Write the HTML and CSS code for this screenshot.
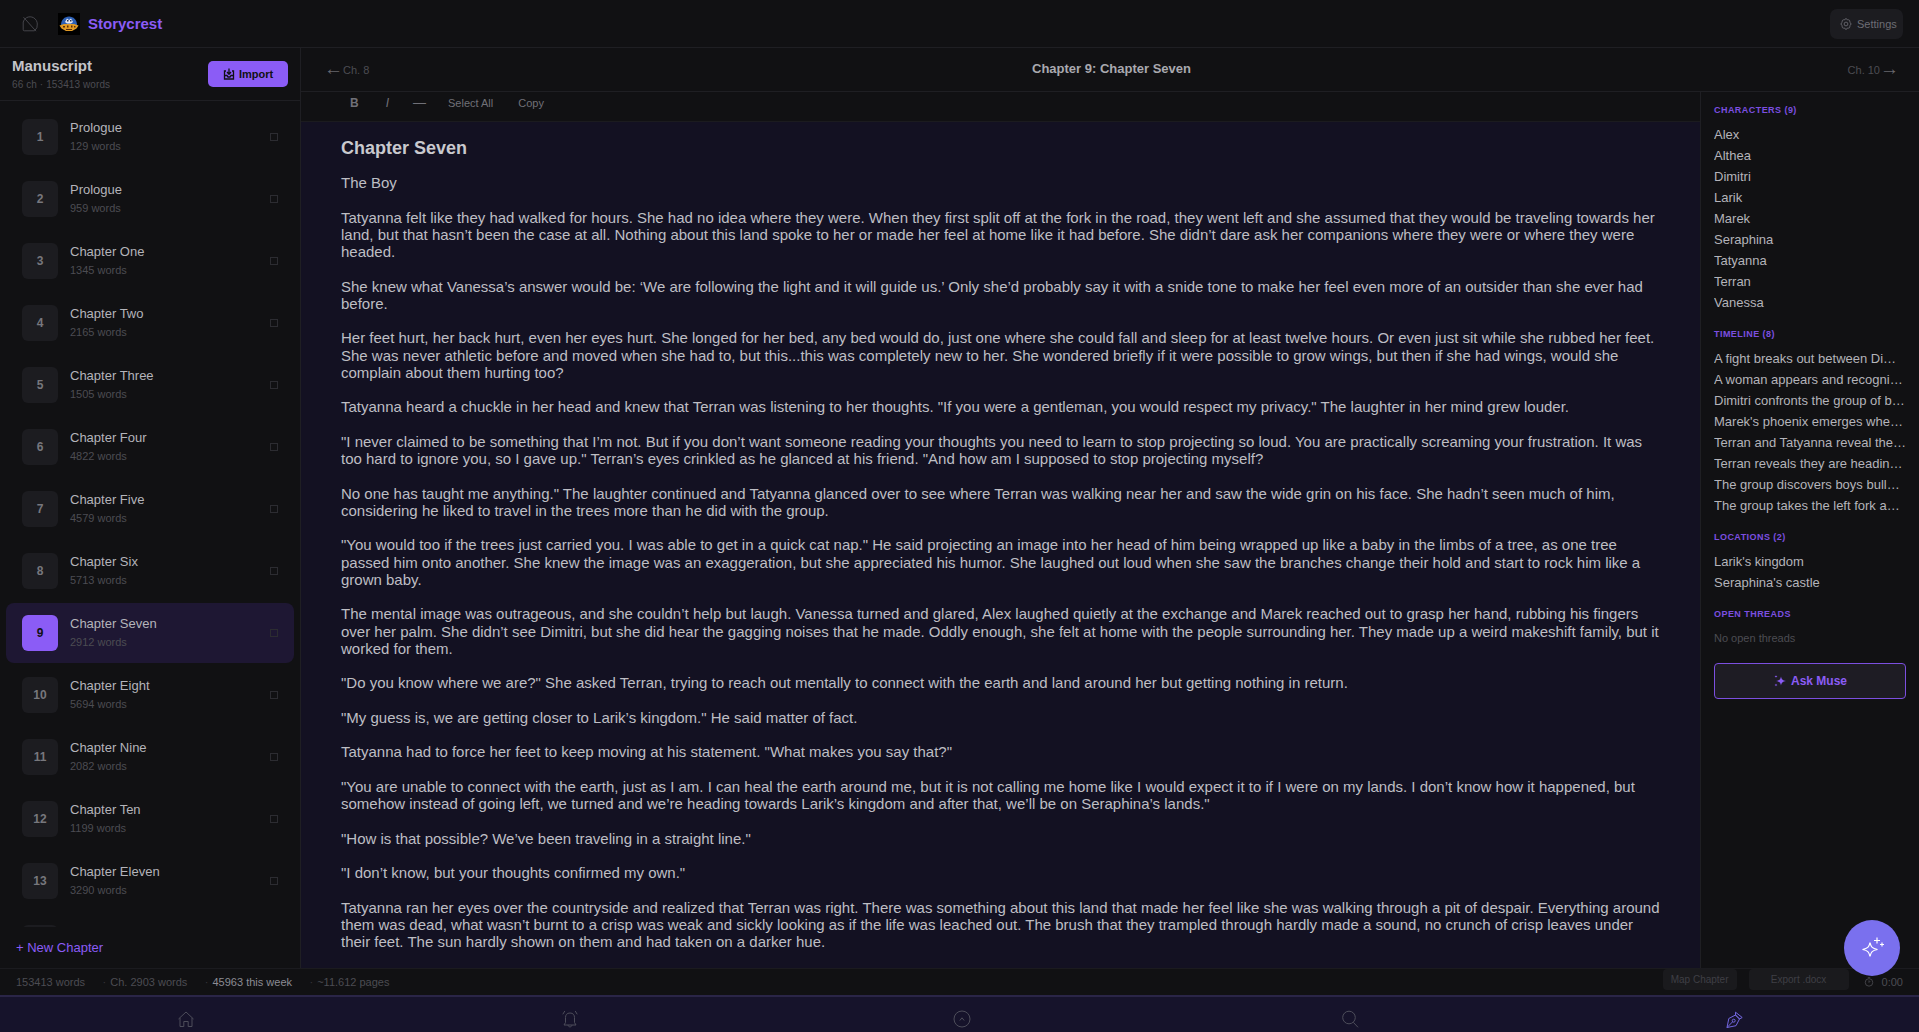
FILE: index.html
```html
<!DOCTYPE html>
<html lang="en">
<head>
<meta charset="utf-8">
<title>Storycrest</title>
<link rel="stylesheet" href="styles.css">
</head>
<body>
<div class="app">
  <header class="topbar">
    <div class="brand">
      <svg class="collapse" viewBox="0 0 16 16" width="16" height="16"><path d="M4.500 1.700A7.300 7.300 0 0 1 15.300 8a7.300 7.300 0 0 1-2.800 6.800H2.200A1 1 0 0 1 1.200 13.800V6A7.300 7.300 0 0 1 4.500 1.700ZM1.500 1.200 14 15.200"/></svg>
      <svg class="logo" viewBox="0 0 22 22" width="22" height="22"><rect width="22" height="22" fill="#000"/><path d="M3 12C3 7 6.500 3.500 11 3.500S19 7 19 12Z" fill="#2c5fb5"/><path d="M7 9 9 5.500l2 1.500 2-1.500 2 3.500-2 1.500H9Z" fill="#e6e8f2"/><path d="M9 7h1.500v1.500H9Zm3 0h1.500v1.500H12Z" fill="#26304f"/><path d="M1.500 12.500 6 11h10l4.500 1.500-2 3-4.500 2.500H8l-4.500-2.500Z" fill="#e19a25"/><path d="M5 13h2v1.500H5Zm4-.5h1.500v2H9Zm4 0h1.500v2H13Zm3 .5h1.500v1.500H16ZM8 16h6v1H8Z" fill="#5a2c08"/></svg>
      <span class="brand-name">Storycrest</span>
    </div>
    <button class="settings"><svg viewBox="0 0 14 14" width="12" height="12"><circle cx="7" cy="7" r="2.200"/><path d="M7 .8c1 0 1.500.8 1.800 1.500.8-.3 1.700-.3 2.300.4s.5 1.500.2 2.200c.8.300 1.500 1 1.500 2.100s-.7 1.700-1.500 2c.3.8.4 1.600-.2 2.300s-1.500.6-2.300.3C8.500 12.400 8 13.200 7 13.200s-1.500-.8-1.800-1.600c-.8.300-1.700.4-2.300-.3s-.5-1.500-.2-2.300C1.900 8.700 1.200 8.100 1.200 7s.7-1.800 1.500-2.100c-.3-.7-.4-1.500.2-2.200s1.500-.7 2.300-.4C5.500 1.600 6 .8 7 .8Z"/></svg>Settings</button>
  </header>
  <div class="main">
    <aside class="sidebar">
      <div class="side-head">
        <div>
          <div class="side-title">Manuscript</div>
          <div class="side-sub">66 ch · 153413 words</div>
        </div>
        <button class="import"><svg viewBox="0 0 12 12" width="12" height="12"><path d="M6 .5v5.500M4 4l2 2.200L8 4M3 3H1.500v8h9V3H9"/><path d="M1.500 7.500h2.500l1 1.500h2l1-1.500h2.500"/></svg>Import</button>
      </div>
      <div class="chapters">
        <div class="chapter"><span class="num">1</span><div class="ch-text"><div class="ch-name">Prologue</div><div class="ch-words">129 words</div></div><span class="check"></span></div>
        <div class="chapter"><span class="num">2</span><div class="ch-text"><div class="ch-name">Prologue</div><div class="ch-words">959 words</div></div><span class="check"></span></div>
        <div class="chapter"><span class="num">3</span><div class="ch-text"><div class="ch-name">Chapter One</div><div class="ch-words">1345 words</div></div><span class="check"></span></div>
        <div class="chapter"><span class="num">4</span><div class="ch-text"><div class="ch-name">Chapter Two</div><div class="ch-words">2165 words</div></div><span class="check"></span></div>
        <div class="chapter"><span class="num">5</span><div class="ch-text"><div class="ch-name">Chapter Three</div><div class="ch-words">1505 words</div></div><span class="check"></span></div>
        <div class="chapter"><span class="num">6</span><div class="ch-text"><div class="ch-name">Chapter Four</div><div class="ch-words">4822 words</div></div><span class="check"></span></div>
        <div class="chapter"><span class="num">7</span><div class="ch-text"><div class="ch-name">Chapter Five</div><div class="ch-words">4579 words</div></div><span class="check"></span></div>
        <div class="chapter"><span class="num">8</span><div class="ch-text"><div class="ch-name">Chapter Six</div><div class="ch-words">5713 words</div></div><span class="check"></span></div>
        <div class="chapter active"><span class="num">9</span><div class="ch-text"><div class="ch-name">Chapter Seven</div><div class="ch-words">2912 words</div></div><span class="check"></span></div>
        <div class="chapter"><span class="num">10</span><div class="ch-text"><div class="ch-name">Chapter Eight</div><div class="ch-words">5694 words</div></div><span class="check"></span></div>
        <div class="chapter"><span class="num">11</span><div class="ch-text"><div class="ch-name">Chapter Nine</div><div class="ch-words">2082 words</div></div><span class="check"></span></div>
        <div class="chapter"><span class="num">12</span><div class="ch-text"><div class="ch-name">Chapter Ten</div><div class="ch-words">1199 words</div></div><span class="check"></span></div>
        <div class="chapter"><span class="num">13</span><div class="ch-text"><div class="ch-name">Chapter Eleven</div><div class="ch-words">3290 words</div></div><span class="check"></span></div>
        <div class="chapter"><span class="num"></span></div>
      </div>
      <div class="new-chapter">+ New Chapter</div>
    </aside>
    <section class="editor">
      <div class="chapter-nav">
        <span class="nav-link"><span class="arrow">←</span>Ch. 8</span>
        <span class="nav-title">Chapter 9: Chapter Seven</span>
        <span class="nav-link nav-next">Ch. 10<span class="arrow">→</span></span>
      </div>
      <div class="editor-row">
        <div class="editor-col">
          <div class="toolbar">
            <span class="tool strong">B</span>
            <span class="tool italic">I</span>
            <span class="tool dash">—</span>
            <span class="tool">Select All</span>
            <span class="tool">Copy</span>
          </div>
          <article class="page">
            <h1>Chapter Seven</h1>
            <p>The Boy</p>
            <p>Tatyanna felt like they had walked for hours. She had no idea where they were. When they first split off at the fork in the road, they went left and she assumed that they would be traveling towards her land, but that hasn’t been the case at all. Nothing about this land spoke to her or made her feel at home like it had before. She didn’t dare ask her companions where they were or where they were headed.</p>
            <p>She knew what Vanessa’s answer would be: ‘We are following the light and it will guide us.’ Only she’d probably say it with a snide tone to make her feel even more of an outsider than she ever had before.</p>
            <p>Her feet hurt, her back hurt, even her eyes hurt. She longed for her bed, any bed would do, just one where she could fall and sleep for at least twelve hours. Or even just sit while she rubbed her feet. She was never athletic before and moved when she had to, but this...this was completely new to her. She wondered briefly if it were possible to grow wings, but then if she had wings, would she complain about them hurting too?</p>
            <p>Tatyanna heard a chuckle in her head and knew that Terran was listening to her thoughts. "If you were a gentleman, you would respect my privacy." The laughter in her mind grew louder.</p>
            <p>"I never claimed to be something that I’m not. But if you don’t want someone reading your thoughts you need to learn to stop projecting so loud. You are practically screaming your frustration. It was too hard to ignore you, so I gave up." Terran’s eyes crinkled as he glanced at his friend. "And how am I supposed to stop projecting myself?</p>
            <p>No one has taught me anything." The laughter continued and Tatyanna glanced over to see where Terran was walking near her and saw the wide grin on his face. She hadn’t seen much of him, considering he liked to travel in the trees more than he did with the group.</p>
            <p>"You would too if the trees just carried you. I was able to get in a quick cat nap." He said projecting an image into her head of him being wrapped up like a baby in the limbs of a tree, as one tree passed him onto another. She knew the image was an exaggeration, but she appreciated his humor. She laughed out loud when she saw the branches change their hold and start to rock him like a grown baby.</p>
            <p>The mental image was outrageous, and she couldn’t help but laugh. Vanessa turned and glared, Alex laughed quietly at the exchange and Marek reached out to grasp her hand, rubbing his fingers over her palm. She didn’t see Dimitri, but she did hear the gagging noises that he made. Oddly enough, she felt at home with the people surrounding her. They made up a weird makeshift family, but it worked for them.</p>
            <p>"Do you know where we are?" She asked Terran, trying to reach out mentally to connect with the earth and land around her but getting nothing in return.</p>
            <p>"My guess is, we are getting closer to Larik’s kingdom." He said matter of fact.</p>
            <p>Tatyanna had to force her feet to keep moving at his statement. "What makes you say that?"</p>
            <p>"You are unable to connect with the earth, just as I am. I can heal the earth around me, but it is not calling me home like I would expect it to if I were on my lands. I don’t know how it happened, but somehow instead of going left, we turned and we’re heading towards Larik’s kingdom and after that, we’ll be on Seraphina’s lands."</p>
            <p>"How is that possible? We’ve been traveling in a straight line."</p>
            <p>"I don’t know, but your thoughts confirmed my own."</p>
            <p>Tatyanna ran her eyes over the countryside and realized that Terran was right. There was something about this land that made her feel like she was walking through a pit of despair. Everything around them was dead, what wasn’t burnt to a crisp was weak and sickly looking as if the life was leached out. The brush that they trampled through hardly made a sound, no crunch of crisp leaves under their feet. The sun hardly shown on them and had taken on a darker hue.</p>
          </article>
        </div>
        <aside class="panel">
          <h2>Characters (9)</h2>
          <ul><li>Alex</li><li>Althea</li><li>Dimitri</li><li>Larik</li><li>Marek</li><li>Seraphina</li><li>Tatyanna</li><li>Terran</li><li>Vanessa</li></ul>
          <h2>Timeline (8)</h2>
          <ul><li>A fight breaks out between Dimitri and Alex</li><li>A woman appears and recognizes Terran</li><li>Dimitri confronts the group of boys</li><li>Marek's phoenix emerges when threatened</li><li>Terran and Tatyanna reveal their bond</li><li>Terran reveals they are heading to Larik</li><li>The group discovers boys bullying a child</li><li>The group takes the left fork a…</li></ul>
          <h2>Locations (2)</h2>
          <ul><li>Larik's kingdom</li><li>Seraphina's castle</li></ul>
          <h2>Open Threads</h2>
          <div class="empty">No open threads</div>
          <button class="muse"><svg viewBox="0 0 14 14" width="14" height="14"><path d="M8 2.500c.6 3 1.400 3.800 5 4.500-3.600.7-4.400 1.500-5 4.500-.6-3-1.400-3.800-5-4.500 3.600-.7 4.400-1.500 5-4.500Z"/><path d="M3 1c.2 1 .5 1.300 1.500 1.500-1 .2-1.300.5-1.500 1.500-.2-1-.5-1.300-1.500-1.500C2.500 2.300 2.800 2 3 1ZM3 9.500c.2 1 .5 1.300 1.500 1.500-1 .2-1.300.5-1.500 1.500-.2-1-.5-1.300-1.500-1.500 1-.2 1.300-.5 1.500-1.500Z"/></svg>Ask Muse</button>
        </aside>
      </div>
    </section>
  </div>
  <footer class="status">
    <div class="stats">
      <span>153413 words</span>
      <span><i>·</i>Ch. 2903 words</span>
      <span class="bright"><i>·</i>45963 this week</span>
      <span><i>·</i>~11.612 pages</span>
    </div>
    <div class="status-actions">
      <button class="map">Map Chapter</button>
      <button class="export">Export .docx</button>
      <span class="timer"><svg viewBox="0 0 12 12" width="10" height="10"><circle cx="6" cy="6.500" r="4.500"/><path d="M6 4v2.500l1.500-1.500M4.500 .8h3"/></svg>0:00</span>
    </div>
  </footer>
  <nav class="bottom-nav">
    <svg viewBox="0 0 18 18" width="18" height="18"><path d="M1.500 9 9 2l7.500 7M3 8v8.500h3.800v-5h4.400v5H15V8"/></svg>
    <svg viewBox="0 0 18 18" width="18" height="18"><path d="M9 3C5.800 3 4.500 5 4.500 7.500v5L3 15h12l-1.500-2.500v-5C13.500 5 12.200 3 9 3ZM7 15c.3 2.500 3.700 2.500 4 0M3.800 1 1.800 4.300M14.200 1l2 3.300"/></svg>
    <svg viewBox="0 0 18 18" width="18" height="18"><circle cx="9" cy="9" r="8"/><path d="M6.800 10.500 9 7.800l2.200 2.700"/></svg>
    <svg viewBox="0 0 18 18" width="18" height="18"><circle cx="8" cy="7.500" r="6.300"/><path d="m12.300 12.300 4.700 5"/></svg>
    <svg class="nav-active" viewBox="0 0 18 18" width="18" height="18"><path d="M1 17.500 2.800 8.500 9.500 5l4 4-3.500 6.700ZM1 17.500 6.700 11.700M9.500 2.200l6.700 5.300-2.700 1.500-4-4Z"/><circle cx="7.700" cy="10.700" r="1.500"/></svg>
  </nav>
  <button class="fab"><svg viewBox="0 0 26 26" width="26" height="26"><path d="M11 7.500c1 4.800 2.300 6 7.500 7-5.200 1-6.500 2.200-7.500 7-1-4.800-2.300-6-7.500-7 5.200-1 6.500-2.200 7.500-7Z"/><path d="M18 2.500v6M15 5.500h6M23 7.500v4M21 9.500h4"/></svg></button>
</div>
</body>
</html>
```
FILE: styles.css
```css
* { box-sizing: border-box; }
html, body { margin: 0; height: 100%; overflow: hidden; }
body { background: #111113; color: #c9c9ce; font-family: "Liberation Sans", Arial, sans-serif; }
button { font-family: inherit; border: 0; cursor: pointer; }
svg { fill: none; stroke: currentColor; stroke-width: 1; flex: none; }
.app { height: 1032px; display: flex; flex-direction: column; position: relative; }

.topbar { height: 48px; flex: none; display: flex; align-items: center; justify-content: space-between; padding: 0 16px 0 22px; border-bottom: 1px solid #1f1f23; }
.brand { display: flex; align-items: center; }
.collapse { color: #45454b; margin-right: 20px; }
.logo { stroke: none; margin-right: 8px; }
.logo path { stroke: none; }
.brand-name { color: #8b5cf6; font-size: 15px; font-weight: 700; }
.settings { width: 73px; height: 30px; padding: 0 0 0 10px; display: flex; align-items: center; gap: 5px; background: #1c1c20; color: #6d6d74; font-size: 11px; border-radius: 7px; }

.main { flex: 1; min-height: 0; display: flex; }
.sidebar { width: 301px; flex: none; display: flex; flex-direction: column; border-right: 1px solid #1f1f23; }
.side-head { height: 53px; flex: none; display: flex; justify-content: space-between; align-items: center; padding: 0 12px 1px; border-bottom: 1px solid #1f1f23; }
.side-title { font-size: 15px; font-weight: 700; color: #c4c4c9; line-height: 17px; }
.side-sub { font-size: 10px; color: #4c4c52; line-height: 12px; margin-top: 5px; letter-spacing: .1px; }
.import { width: 80px; height: 26px; margin-top: 1px; display: flex; align-items: center; justify-content: center; gap: 4px; padding: 0 0 1px; background: #8b5cf6; color: #111113; font-size: 11px; font-weight: 700; border-radius: 5px; }
.import svg { stroke-width: 1.300; }
.chapters { flex: 1; min-height: 0; overflow: hidden; padding: 6px 6px 0; display: flex; flex-direction: column; gap: 2px; }
.chapter { height: 60px; flex: none; display: flex; align-items: center; padding: 0 16px; border-radius: 8px; }
.chapter.active { background: #1e1733; }
.num { width: 36px; height: 36px; flex: none; display: flex; align-items: center; justify-content: center; background: #1c1c20; color: #77777d; font-size: 12px; font-weight: 700; border-radius: 6px; }
.active .num { background: #8b5cf6; color: #111113; }
.ch-text { flex: 1; margin-left: 12px; padding-bottom: 2px; }
.ch-name { font-size: 13px; line-height: 16px; color: #b4b4ba; }
.ch-words { font-size: 11px; line-height: 13px; margin-top: 4px; color: #4c4c52; }
.check { width: 8px; height: 8px; border: 1px solid #2c2c31; }
.new-chapter { height: 41px; flex: none; display: flex; align-items: center; padding: 0 16px; color: #8b5cf6; font-size: 13px; }

.editor { flex: 1; min-width: 0; display: flex; flex-direction: column; }
.chapter-nav { height: 44px; flex: none; display: grid; grid-template-columns: 1fr auto 1fr; align-items: center; padding: 0 20px 0 23px; border-bottom: 1px solid #1f1f23; }
.nav-link { font-size: 11px; color: #4c4c52; display: flex; align-items: center; }
.nav-next { justify-content: flex-end; }
.arrow { font-size: 19px; color: #68686e; line-height: 1; margin-bottom: 3px; }
.nav-title { font-size: 13px; font-weight: 700; color: #a9a9af; margin-bottom: 2px; }
.editor-row { flex: 1; min-height: 0; display: flex; }
.editor-col { flex: 1; min-width: 0; display: flex; flex-direction: column; }
.toolbar { height: 30px; flex: none; display: flex; align-items: center; gap: 25px; padding: 0 0 8px 49px; border-bottom: 1px solid #1b1b1f; }
.tool { font-size: 11px; color: #707077; }
.strong { font-size: 12px; font-weight: 700; }
.italic { font-style: italic; font-size: 12px; margin-left: 2px; }
.dash { font-size: 13px; margin-left: -1px; margin-right: -3px; }
.page { flex: 1; min-height: 0; overflow: hidden; background: #131122; padding: 16px 40px 0; font-size: 15px; line-height: 1.15; color: #bebec4; }
.page h1 { margin: 0 0 15px; font-size: 18px; line-height: 21px; font-weight: 700; color: #c9c9ce; }
.page p { margin: 0 0 17.250px; }
.panel { width: 219px; flex: none; padding: 12px 13px 0; border-left: 1px solid #1f1f23; background: #111113; }
.panel h2 { margin: 0 0 7px; font-size: 9px; line-height: 13px; font-weight: 700; letter-spacing: .45px; text-transform: uppercase; color: #7c4fe0; }
.panel ul { list-style: none; margin: 0 0 15px; padding: 0; }
.panel li { font-size: 13px; line-height: 21px; color: #b4b4ba; white-space: nowrap; overflow: hidden; text-overflow: ellipsis; }
.empty { font-size: 11px; color: #4c4c52; line-height: 20px; margin-bottom: 15px; }
.muse { width: 192px; height: 36px; display: flex; align-items: center; justify-content: center; gap: 4px; background: #1e1c24; border: 1px solid #7c4fe0; border-radius: 4px; color: #8b5cf6; font-size: 12px; font-weight: 700; }
.muse svg { fill: currentColor; stroke: none; }

.status { height: 27px; flex: none; display: flex; justify-content: space-between; padding: 0 16px; border-top: 1px solid #1b1b1f; color: #4c4c52; font-size: 11px; }
.stats { display: flex; gap: 17.500px; align-items: center; }
.stats i { font-style: normal; margin-right: 4px; color: #36363b; }
.bright { color: #8c8c93; }
.status-actions { display: flex; align-items: flex-start; }
.status-actions button { height: 21px; background: #1a1a1d; color: #3f3f45; font-size: 10px; border-radius: 4px; padding: 0; }
.map { width: 74px; margin-right: 12px; }
.export { width: 100px; margin-right: 15px; }
.timer { height: 100%; display: flex; align-items: center; gap: 8px; color: #4c4c52; font-size: 11px; }

.bottom-nav { height: 37px; flex: none; display: grid; grid-template-columns: 384px 392px 388px 385px 18px; align-items: center; padding: 9px 0 0 177px; background: #16132b; border-top: 2px solid #2a2547; color: #4d4d5a; }
.nav-active { color: #7367e0; }
.fab { position: absolute; left: 1844px; top: 920px; width: 56px; height: 56px; border-radius: 50%; background: #7a70ee; color: #fff; display: flex; align-items: center; justify-content: center; padding: 0; }
.fab svg { stroke-width: 1.200; }
```
